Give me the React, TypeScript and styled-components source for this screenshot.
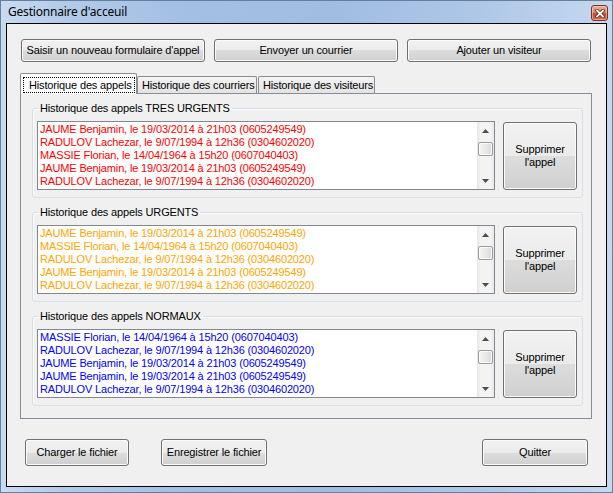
import React from "react";
import styled, { createGlobalStyle } from "styled-components";

const Global = createGlobalStyle`
  html, body { margin: 0; padding: 0; background: #ffffff; }
  body { font-family: "Liberation Sans", Arial, sans-serif; }
  * { box-sizing: border-box; }
`;

const UI_FONT = `"Liberation Sans", Arial, sans-serif`;

const Window = styled.div`
  width: 613px;
  height: 493px;
  display: flex;
  flex-direction: column;
  border: 1px solid #64809f;
  background: linear-gradient(
    90deg,
    #c9dbf1 0%,
    #b3cbea 10%,
    #a3bfe3 30%,
    #a1bde2 55%,
    #aec7e7 78%,
    #c5d8ef 100%
  );
`;

const TitleBar = styled.div`
  height: 22px;
  display: flex;
  align-items: flex-start;
  padding-left: 7px;
`;

const TitleText = styled.div`
  flex: 1;
  font-family: "Noto Sans", "Open Sans", sans-serif;
  font-size: 12px;
  letter-spacing: -0.2px;
  line-height: 22px;
  color: #000;
`;

const CloseButton = styled.div`
  width: 17px;
  height: 16px;
  margin: 4px 4px 0 0;
  border: 1px solid #7c3222;
  border-radius: 3px;
  background: linear-gradient(#e9ab99 0%, #dc8b74 45%, #c9482d 55%, #d46a4d 100%);
  display: flex;
  align-items: center;
  justify-content: center;
  box-shadow: inset 0 0 0 1px rgba(255, 220, 210, 0.5);
`;

const Client = styled.div`
  flex: 1;
  margin: 0 5px 5px 5px;
  border: 1px solid #000;
  background: #f0f0f0;
  display: flex;
  flex-direction: column;
`;

const Button = styled.button<{ $w: number; $h: number }>`
  width: ${(p) => p.$w}px;
  height: ${(p) => p.$h}px;
  padding: 0;
  margin: 0;
  border: 1px solid #707070;
  border-radius: 3px;
  background: linear-gradient(#f2f2f2 0%, #ebebeb 50%, #dddddd 50%, #cfcfcf 100%);
  box-shadow: inset 0 0 0 1px #fbfbfb;
  font-family: ${UI_FONT};
  font-size: 11px;
  letter-spacing: -0.15px;
  line-height: 13px;
  color: #000;
  text-align: center;
  flex-shrink: 0;
`;

const TopRow = styled.div`
  display: flex;
  gap: 9px;
  margin: 15px 0 0 14px;
`;

const TabControl = styled.div`
  margin: 11px 0 0 13px;
  width: 572px;
  display: flex;
  flex-direction: column;
`;

const TabStrip = styled.div`
  height: 20px;
  display: flex;
  align-items: flex-end;
  position: relative;
  z-index: 1;
`;

const Tab = styled.div<{ $active?: boolean; $w: number; $gap?: number }>`
  width: ${(p) => p.$w}px;
  height: ${(p) => (p.$active ? 21 : 17)}px;
  margin-left: ${(p) => p.$gap ?? 0}px;
  margin-bottom: ${(p) => (p.$active ? -1 : 0)}px;
  border: 1px solid #898c95;
  border-bottom: none;
  border-radius: 2px 2px 0 0;
  background: ${(p) =>
    p.$active ? "#ffffff" : "linear-gradient(#f3f3f3 0%, #ebebeb 50%, #e3e3e3 100%)"};
  padding: ${(p) => (p.$active ? "3px 0 0 2px" : "0 0 0 4px")};
  font-family: ${UI_FONT};
  font-size: 11px;
  letter-spacing: -0.15px;
  line-height: 16px;
  color: #000;
  white-space: nowrap;
`;

const FocusRect = styled.div`
  width: 112px;
  height: 16px;
  border: 1px dotted #000;
  padding-left: 5px;
  line-height: 14px;
`;

const TabPanel = styled.div`
  height: 326px;
  border: 1px solid #898c95;
  background: #f0f0f0;
  padding: 8px 0 0 11px;
  display: flex;
  flex-direction: column;
  gap: 8px;
`;

const GroupBox = styled.fieldset`
  width: 551px;
  margin: 0;
  padding: 6px 5px 7px 4px;
  border: 1px solid #d5dfe5;
  border-radius: 3px;
  box-shadow: inset 1px 1px 0 #fafafa;
  min-inline-size: 0;
`;

const Legend = styled.legend`
  margin-left: 1px;
  padding: 0 2px;
  font-family: ${UI_FONT};
  font-size: 11px;
  letter-spacing: -0.15px;
  line-height: 13px;
  color: #000;
`;

const GroupBody = styled.div`
  display: flex;
  align-items: flex-start;
  gap: 8px;
`;

const ListBox = styled.div`
  width: 458px;
  height: 69px;
  border: 1px solid #828790;
  background: #ffffff;
  display: flex;
`;

const ListItems = styled.div<{ $color: string }>`
  flex: 1;
  overflow: hidden;
  padding: 1px 0 0 2px;
  color: ${(p) => p.$color};
  font-family: ${UI_FONT};
  font-size: 11px;
  letter-spacing: -0.15px;
`;

const Row = styled.div`
  height: 13px;
  line-height: 13px;
  white-space: nowrap;
`;

const ScrollBar = styled.div`
  width: 17px;
  display: flex;
  flex-direction: column;
  background: linear-gradient(90deg, #e6e6e6 0%, #f3f3f3 20%, #f3f3f3 80%, #e9e9e9 100%);
`;

const ArrowButton = styled.div`
  height: 17px;
  display: flex;
  align-items: center;
  justify-content: center;
`;

const Track = styled.div`
  flex: 1;
  padding: 3px 1px 0 1px;
`;

const Thumb = styled.div`
  height: 14px;
  border: 1px solid #9b9b9b;
  border-radius: 2px;
  background: linear-gradient(90deg, #f4f4f4 0%, #e9e9e9 50%, #d9d9d9 100%);
  box-shadow: inset 0 0 0 1px #fbfbfb;
`;

const DeleteButton = styled(Button)`
  margin-top: 1px;
`;

const BottomRow = styled.div`
  display: flex;
  margin-top: 20px;
  padding: 0 18px;
`;

const Spacer = styled.div<{ $w?: number }>`
  ${(p) => (p.$w ? `width: ${p.$w}px;` : "flex: 1;")}
`;

const Arrow = ({ up }: { up?: boolean }) => (
  <svg width="7" height="4" viewBox="0 0 7 4">
    <path d={up ? "M0 4 L3.5 0 L7 4 Z" : "M0 0 L3.5 4 L7 0 Z"} fill="#4d4d4d" />
  </svg>
);

const CloseGlyph = () => (
  <svg width="10" height="9" viewBox="0 0 10 9">
    <path d="M2 1.5 L8 7.5 M8 1.5 L2 7.5" stroke="#5e2a20" strokeWidth="3.4" strokeLinecap="square" />
    <path d="M2 1.5 L8 7.5 M8 1.5 L2 7.5" stroke="#ffffff" strokeWidth="1.8" strokeLinecap="square" />
  </svg>
);

const JAUME = "JAUME Benjamin, le 19/03/2014 à 21h03 (0605249549)";
const RADULOV = "RADULOV Lachezar, le 9/07/1994 à 12h36 (0304602020)";
const MASSIE = "MASSIE Florian, le 14/04/1964 à 15h20 (0607040403)";

const groups = [
  {
    title: "Historique des appels TRES URGENTS",
    color: "#ff0000",
    rows: [JAUME, RADULOV, MASSIE, JAUME, RADULOV],
  },
  {
    title: "Historique des appels URGENTS",
    color: "#ffa500",
    rows: [JAUME, MASSIE, RADULOV, JAUME, RADULOV],
  },
  {
    title: "Historique des appels NORMAUX",
    color: "#0000ff",
    rows: [MASSIE, RADULOV, JAUME, JAUME, RADULOV],
  },
];

export default function App() {
  return (
    <>
      <Global />
      <Window>
        <TitleBar>
          <TitleText>Gestionnaire d'acceuil</TitleText>
          <CloseButton>
            <CloseGlyph />
          </CloseButton>
        </TitleBar>
        <Client>
          <TopRow>
            <Button $w={184} $h={23}>Saisir un nouveau formulaire d'appel</Button>
            <Button $w={184} $h={23}>Envoyer un courrier</Button>
            <Button $w={184} $h={23}>Ajouter un visiteur</Button>
          </TopRow>
          <TabControl>
            <TabStrip>
              <Tab $active $w={117}>
                <FocusRect>Historique des appels</FocusRect>
              </Tab>
              <Tab $w={120}>Historique des courriers</Tab>
              <Tab $w={117} $gap={1}>Historique des visiteurs</Tab>
            </TabStrip>
            <TabPanel>
              {groups.map((g) => (
                <GroupBox key={g.title}>
                  <Legend>{g.title}</Legend>
                  <GroupBody>
                    <ListBox>
                      <ListItems $color={g.color}>
                        {g.rows.map((r, i) => (
                          <Row key={i}>{r}</Row>
                        ))}
                      </ListItems>
                      <ScrollBar>
                        <ArrowButton>
                          <Arrow up />
                        </ArrowButton>
                        <Track>
                          <Thumb />
                        </Track>
                        <ArrowButton>
                          <Arrow />
                        </ArrowButton>
                      </ScrollBar>
                    </ListBox>
                    <DeleteButton $w={74} $h={68}>
                      Supprimer
                      <br />
                      l'appel
                    </DeleteButton>
                  </GroupBody>
                </GroupBox>
              ))}
            </TabPanel>
          </TabControl>
          <BottomRow>
            <Button $w={104} $h={27}>Charger le fichier</Button>
            <Spacer $w={32} />
            <Button $w={106} $h={27}>Enregistrer le fichier</Button>
            <Spacer />
            <Button $w={106} $h={27}>Quitter</Button>
          </BottomRow>
        </Client>
      </Window>
    </>
  );
}
